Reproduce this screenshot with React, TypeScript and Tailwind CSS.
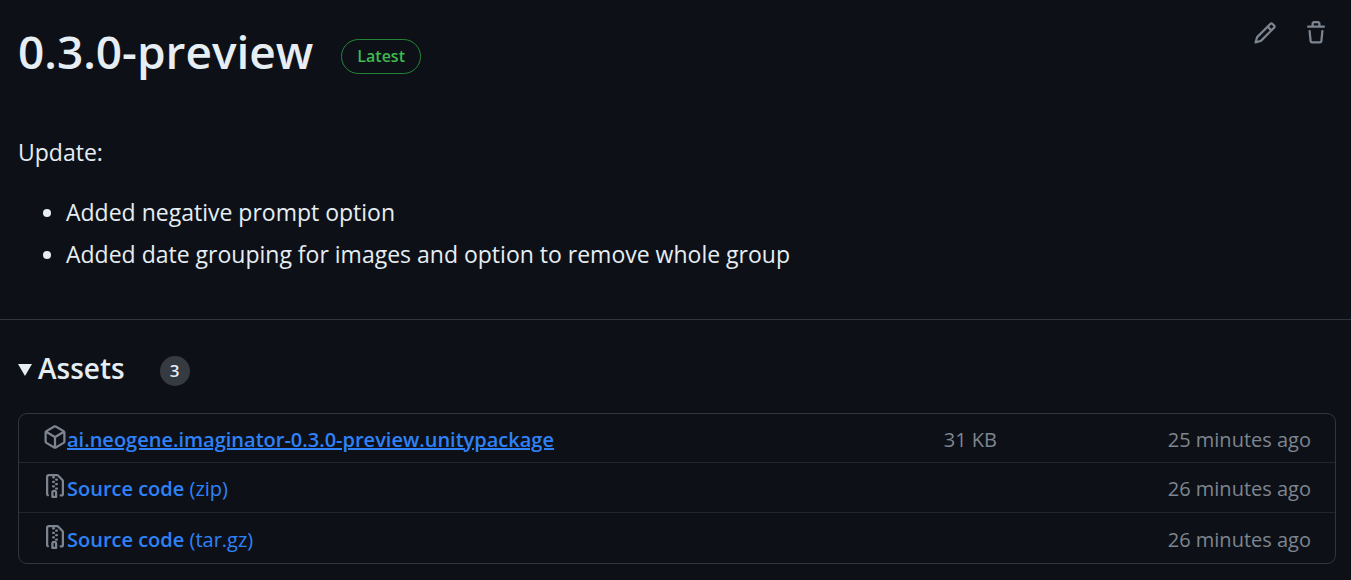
import type { ReactNode } from 'react';

const paths = {
  pencil:
    'M11.013 1.427a1.75 1.75 0 0 1 2.474 0l1.086 1.086a1.75 1.75 0 0 1 0 2.474l-8.61 8.61c-.21.21-.47.364-.756.445l-3.251.93a.75.75 0 0 1-.927-.928l.929-3.25c.081-.286.235-.547.445-.758l8.61-8.61Zm.176 4.823L9.75 4.81l-6.286 6.287a.253.253 0 0 0-.064.108l-.558 1.953 1.953-.558a.253.253 0 0 0 .108-.064Zm1.238-3.763a.25.25 0 0 0-.354 0L10.811 3.75l1.439 1.44 1.263-1.263a.25.25 0 0 0 0-.354Z',
  trash:
    'M11 1.75V3h2.25a.75.75 0 0 1 0 1.5H2.75a.75.75 0 0 1 0-1.5H5V1.75C5 .784 5.784 0 6.75 0h2.5C10.216 0 11 .784 11 1.75ZM4.496 6.675l.66 6.6a.25.25 0 0 0 .249.225h5.19a.25.25 0 0 0 .249-.225l.66-6.6a.75.75 0 0 1 1.492.149l-.66 6.6A1.748 1.748 0 0 1 10.595 15h-5.19a1.75 1.75 0 0 1-1.741-1.575l-.66-6.6a.75.75 0 1 1 1.492-.15ZM6.5 1.75V3h3V1.75a.25.25 0 0 0-.25-.25h-2.5a.25.25 0 0 0-.25.25Z',
  package:
    'm8.878.392 5.25 3.045c.54.314.872.89.872 1.514v6.098a1.75 1.75 0 0 1-.872 1.514l-5.25 3.045a1.75 1.75 0 0 1-1.756 0l-5.25-3.045A1.75 1.75 0 0 1 1 11.049V4.951c0-.624.332-1.201.872-1.514L7.122.392a1.75 1.75 0 0 1 1.756 0ZM7.875 1.69l-4.63 2.685L8 7.133l4.755-2.758-4.63-2.685a.248.248 0 0 0-.25 0ZM2.5 5.677v5.372c0 .09.047.171.125.216l4.625 2.683V8.432Zm6.25 8.271 4.625-2.683a.25.25 0 0 0 .125-.216V5.677L8.75 8.432Z',
  zip: 'M3.5 1.75v11.5c0 .09.048.173.126.217a.75.75 0 0 1-.752 1.298A1.748 1.748 0 0 1 2 13.25V1.75C2 .784 2.784 0 3.75 0h5.586c.464 0 .909.185 1.237.513l2.914 2.914c.329.328.513.773.513 1.237v8.586A1.75 1.75 0 0 1 12.25 15h-.5a.75.75 0 0 1 0-1.5h.5a.25.25 0 0 0 .25-.25V4.664a.25.25 0 0 0-.073-.177L9.513 1.573a.25.25 0 0 0-.177-.073H7.25a.75.75 0 0 1 0 1.5h-.5a.75.75 0 0 1 0-1.5h-3a.25.25 0 0 0-.25.25Zm3.75 8.75h.5c.966 0 1.75.784 1.75 1.75v3a.75.75 0 0 1-.75.75h-2.5a.75.75 0 0 1-.75-.75v-3c0-.966.784-1.75 1.75-1.75ZM6 5.25a.75.75 0 0 1 .75-.75h.5a.75.75 0 0 1 0 1.5h-.5A.75.75 0 0 1 6 5.25Zm.75 2.25h.5a.75.75 0 0 1 0 1.5h-.5a.75.75 0 0 1 0-1.5Zm1.25-.75A.75.75 0 0 1 8.75 6h.5a.75.75 0 0 1 0 1.5h-.5A.75.75 0 0 1 8 6.75ZM8.75 3h.5a.75.75 0 0 1 0 1.5h-.5a.75.75 0 0 1 0-1.5ZM8 9.75A.75.75 0 0 1 8.75 9h.5a.75.75 0 0 1 0 1.5h-.5A.75.75 0 0 1 8 9.75Zm-1 2.5v2.25h1v-2.25a.25.25 0 0 0-.25-.25h-.5a.25.25 0 0 0-.25.25Z',
};

function Icon({ name }: { name: keyof typeof paths }) {
  return (
    <svg viewBox="0 0 16 16" className="size-6 shrink-0 fill-[#7d8590]" aria-hidden="true">
      <path d={paths[name]} />
    </svg>
  );
}

function Asset({ icon, size, age, children }: { icon: 'package' | 'zip'; size?: string; age: string; children: ReactNode }) {
  return (
    <li className="flex h-[50px] items-center border-t border-[#21262d] px-6 pt-[3px] text-[#7d8590] first:h-12 first:border-t-0 last:h-[51px]">
      <div className="flex flex-1 items-start">
        <Icon name={icon} />
        {children}
      </div>
      <span className="w-28 text-right">{size}</span>
      <span className="w-[314px] text-right">{age}</span>
    </li>
  );
}

export default function App() {
  return (
    <main className="min-h-screen bg-[#0d1117] pb-4 font-['Open_Sans','Noto_Sans',sans-serif] text-[#e6edf3]">
      <section className="border-b border-[#30363d] pr-[23px] pb-[47px] pl-[18px]">
        <header className="flex items-start justify-between pt-5">
          <div className="flex items-center gap-7">
            <h1 className="text-[46px] leading-[62px] font-semibold">0.3.0-preview</h1>
            <span className="mt-2.5 rounded-full border border-[#238636] px-[15px] text-[16px] leading-[33px] font-semibold text-[#3fb950]">
              Latest
            </span>
          </div>
          <div className="flex gap-[27px] pt-px">
            <button type="button" aria-label="Edit release">
              <Icon name="pencil" />
            </button>
            <button type="button" aria-label="Delete release">
              <Icon name="trash" />
            </button>
          </div>
        </header>
        <div className="pt-[52px] text-[23px] leading-9">
          <p>Update:</p>
          <ul className="mt-6 list-disc space-y-1.5 pl-12">
            <li>Added negative prompt option</li>
            <li>Added date grouping for images and option to remove whole group</li>
          </ul>
        </div>
      </section>

      <details open className="group pt-7 pr-[15px] pl-[18px]">
        <summary className="flex cursor-pointer list-none items-center">
          <svg viewBox="0 0 14 12" className="mt-1 mr-1.5 h-3 w-3.5 -rotate-90 fill-[#e6edf3] group-open:rotate-0" aria-hidden="true">
            <path d="M0 0h14L7 12Z" />
          </svg>
          <h2 className="text-[28px] leading-10 font-semibold">Assets</h2>
          <span className="mt-1.5 ml-[35px] h-[30px] w-[30px] rounded-full bg-[#363b42] text-center text-[17px] leading-[30px] font-semibold">
            3
          </span>
        </summary>
        <ul className="mt-[25px] rounded-[9px] border border-[#30363d] text-[20px] leading-[30px]">
          <Asset icon="package" size="31 KB" age="25 minutes ago">
            <a href="#unitypackage" className="font-semibold text-[#2f81f7] underline">
              ai.neogene.imaginator-0.3.0-preview.unitypackage
            </a>
          </Asset>
          <Asset icon="zip" age="26 minutes ago">
            <a href="#zip" className="text-[#2f81f7]">
              <span className="font-semibold">Source code</span> (zip)
            </a>
          </Asset>
          <Asset icon="zip" age="26 minutes ago">
            <a href="#tar" className="text-[#2f81f7]">
              <span className="font-semibold">Source code</span> (tar.gz)
            </a>
          </Asset>
        </ul>
      </details>
    </main>
  );
}
